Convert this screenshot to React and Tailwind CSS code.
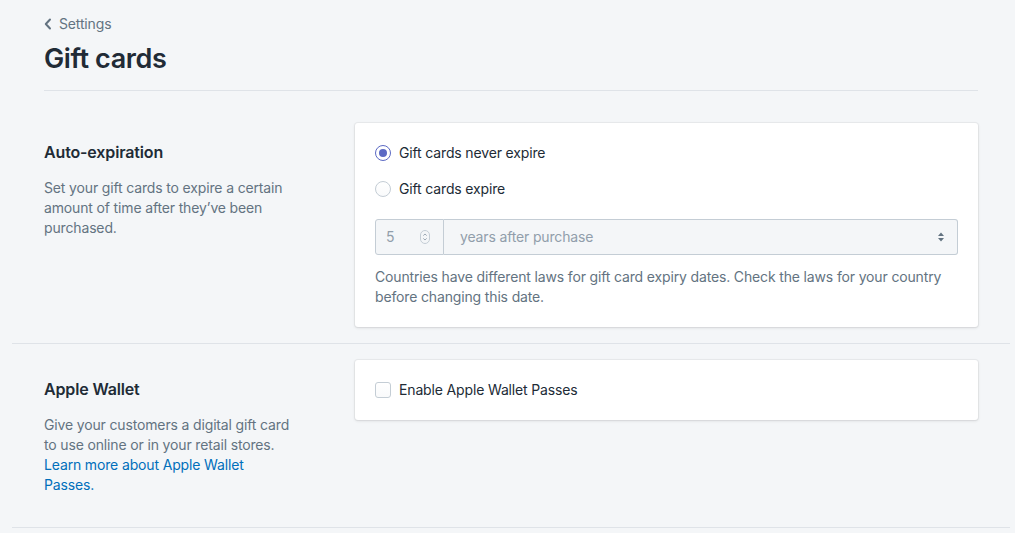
import { useState } from "react";

function Radio({ checked, label }) {
  return (
    <label className="flex items-center gap-2 h-5 cursor-pointer">
      <span
        className={
          "w-4 h-4 rounded-full flex items-center justify-center border " +
          (checked
            ? "border-[#5c6ac4] bg-white"
            : "border-[#c4cdd5] bg-gradient-to-b from-white to-[#f9fafb]")
        }
      >
        {checked && <span className="w-2 h-2 rounded-full bg-[#5c6ac4]" />}
      </span>
      <span className="text-sm text-[#212b36]">{label}</span>
    </label>
  );
}

function Stepper() {
  return (
    <svg width="10" height="14" viewBox="0 0 10 14">
      <rect x="0.5" y="0.5" width="9" height="13" rx="4.5" fill="none" stroke="#c4cdd5" />
      <path d="M3.3 5.6 5 4l1.7 1.6M3.3 8.4 5 10l1.7-1.6" fill="none" stroke="#919eab" strokeWidth="0.9" />
    </svg>
  );
}

function SelectArrows() {
  return (
    <svg width="8" height="10" viewBox="0 0 8 10">
      <path d="M4 0.5 7 4H1z M4 9.5 1 6h6z" fill="#637381" />
    </svg>
  );
}

function Section({ title, children, description, first }) {
  return (
    <div
      className={
        "ml-[12px] mr-[5px] px-[32px] flex border-b border-[#dfe3e8] " +
        (first ? "pt-[32px] pb-[16px]" : "pt-[16px] pb-[32px]")
      }
    >
      <div className="w-[311px] flex-none pt-[17px] pr-[58px]">
        <h2 className="text-base leading-6 font-semibold text-[#212b36]">{title}</h2>
        <div className="mt-[14px] text-sm leading-5 text-[#637381]">{description}</div>
      </div>
      <div className="flex-1 self-start bg-white rounded-[3px] shadow-[0_0_0_1px_rgba(63,63,68,0.05),0_1px_3px_0_rgba(63,63,68,0.15)] p-5">
        {children}
      </div>
    </div>
  );
}

export default function App() {
  const [wallet, setWallet] = useState(false);
  return (
    <div
      className="min-h-screen bg-[#f4f6f8] overflow-hidden tracking-[-0.15px]"
      style={{ fontFamily: "Inter, 'Noto Sans', sans-serif" }}
    >
      <div className="ml-[44px] mr-[37px] pt-[14px] pb-[15px] border-b border-[#dfe3e8]">
        <a className="flex items-center gap-[7px] text-sm leading-5 text-[#637381]">
          <svg width="8" height="12" viewBox="0 0 8 12">
            <path d="M6 1.5 1.8 6 6 10.5" fill="none" stroke="#637381" strokeWidth="2" strokeLinecap="round" strokeLinejoin="round" />
          </svg>
          Settings
        </a>
        <h1 className="mt-[9px] text-[27px] leading-8 font-semibold tracking-[-0.4px] text-[#212b36]">Gift cards</h1>
      </div>

      <Section
        first
        title="Auto-expiration"
        description="Set your gift cards to expire a certain amount of time after they’ve been purchased."
      >
        <div className="flex flex-col gap-4">
          <Radio checked label="Gift cards never expire" />
          <Radio label="Gift cards expire" />
        </div>
        <div className="mt-5 flex h-9 text-sm text-[#919eab]">
          <div className="w-[69px] flex items-center justify-between pl-[10px] pr-[13px] bg-[#f4f6f8] border border-[#c4cdd5] rounded-l-[3px]">
            <span>5</span>
            <Stepper />
          </div>
          <div className="flex-1 flex items-center justify-between pl-4 pr-[12px] bg-[#f4f6f8] border border-l-0 border-[#c4cdd5] rounded-r-[3px]">
            <span>years after purchase</span>
            <SelectArrows />
          </div>
        </div>
        <p className="mt-3 text-sm leading-5 text-[#637381]">
          Countries have different laws for gift card expiry dates. Check the laws for your country before changing this date.
        </p>
      </Section>

      <Section
        title="Apple Wallet"
        description={
          <>
            Give your customers a digital gift card to use online or in your retail stores.{" "}
            <a className="text-[#006fbb]">Learn more about Apple Wallet Passes.</a>
          </>
        }
      >
        <label className="flex items-center gap-2 h-5 cursor-pointer" onClick={() => setWallet(!wallet)}>
          <span className="w-4 h-4 rounded-[3px] border border-[#c4cdd5] bg-gradient-to-b from-white to-[#f9fafb]" />
          <span className="text-sm text-[#212b36]">Enable Apple Wallet Passes</span>
        </label>
      </Section>
    </div>
  );
}
